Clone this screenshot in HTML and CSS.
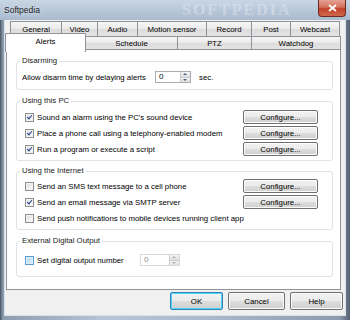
FILE: index.html
```html
<!DOCTYPE html>
<html>
<head>
<meta charset="utf-8">
<link rel="stylesheet" href="styles.css">
</head>
<body>
<div class="window">
  <div class="titlebar">
    <span class="title">Softpedia</span>
    <span class="watermark">SOFTPEDIA</span>
    <div class="close"><svg width="9" height="8" viewBox="0 0 9 8"><path d="M1 1 L8 7 M8 1 L1 7" stroke="#fff" stroke-width="1.8"/></svg></div>
  </div>
  <div class="client">
    <div class="tabrow row1">
      <div class="tab w-general">General</div>
      <div class="tab w-video">Video</div>
      <div class="tab w-audio">Audio</div>
      <div class="tab w-motion">Motion sensor</div>
      <div class="tab w-record">Record</div>
      <div class="tab w-post">Post</div>
      <div class="tab w-webcast">Webcast</div>
    </div>
    <div class="tabrow row2">
      <div class="tab active w-alerts">Alerts</div>
      <div class="tab w-schedule">Schedule</div>
      <div class="tab w-ptz">PTZ</div>
      <div class="tab w-watchdog">Watchdog</div>
    </div>
    <div class="panel">
      <fieldset class="group g-disarm">
        <legend>Disarming</legend>
        <div class="row">
          <span class="plain-label">Allow disarm time by delaying alerts</span>
          <span class="spinner"><span class="spin-input">0</span><span class="spin-btns"><span class="up"></span><span class="down"></span></span></span>
          <span class="unit">sec.</span>
        </div>
      </fieldset>
      <fieldset class="group g-pc">
        <legend>Using this PC</legend>
        <div class="row"><span class="check on"></span><span class="label">Sound an alarm using the PC's sound device</span><span class="btn cfg">Configure...</span></div>
        <div class="row"><span class="check on"></span><span class="label">Place a phone call using a telephony-enabled modem</span><span class="btn cfg">Configure...</span></div>
        <div class="row"><span class="check on"></span><span class="label">Run a program or execute a script</span><span class="btn cfg">Configure...</span></div>
      </fieldset>
      <fieldset class="group g-net">
        <legend>Using the Internet</legend>
        <div class="row"><span class="check"></span><span class="label">Send an SMS text message to a cell phone</span><span class="btn cfg">Configure...</span></div>
        <div class="row"><span class="check on"></span><span class="label">Send an email message via SMTP server</span><span class="btn cfg">Configure...</span></div>
        <div class="row"><span class="check"></span><span class="label">Send push notifications to mobile devices running client app</span></div>
      </fieldset>
      <fieldset class="group g-ext">
        <legend>External Digital Output</legend>
        <div class="row">
          <span class="check hover"></span><span class="label ext-label">Set digital output number</span>
          <span class="spinner disabled"><span class="spin-input">0</span><span class="spin-btns"><span class="up"></span><span class="down"></span></span></span>
        </div>
      </fieldset>
    </div>
    <div class="buttons">
      <span class="btn dlg ok">OK</span>
      <span class="btn dlg cancel">Cancel</span>
      <span class="btn dlg help">Help</span>
    </div>
  </div>
</div>
</body>
</html>
```

FILE: styles.css
```css
html, body {
  margin: 0;
  padding: 0;
  background: #2b3440;
}
body {
  font-family: "Liberation Sans", Arial, sans-serif;
  font-size: 7.8px;
  color: #000;
}
.window {
  width: 350px;
  height: 320px;
  box-sizing: border-box;
  padding: 0 4px 4px 4px;
  background: linear-gradient(90deg, #4a5665 0px, #8d9db0 3px, #b7c6d6 30%, #a9bacd 60%, #8b9bb0 97%, #566273 100%);
  display: flex;
  flex-direction: column;
}
.titlebar {
  height: 20px;
  flex: none;
  display: flex;
  align-items: center;
  position: relative;
  margin: 0 -4px;
  padding: 0 4px;
  background: linear-gradient(180deg, #c9d6e4 0%, #b5c5d7 60%, #aabbcf 100%);
  overflow: hidden;
}
.title {
  font-family: "Liberation Sans", Arial, sans-serif;
  font-size: 8.5px;
  color: #1b1b1b;
  text-shadow: 0 0 4px #e8eef5;
}
.watermark {
  position: absolute;
  left: 182px;
  top: 1px;
  line-height: 18px;
  font-family: "Liberation Serif", serif;
  font-size: 16px;
  font-weight: bold;
  letter-spacing: 2px;
  color: rgba(255,255,255,0.3);
}
.close {
  position: absolute;
  right: 4px;
  top: 0;
  width: 28px;
  height: 17px;
  box-sizing: border-box;
  border: 1px solid #6b2a22;
  border-top: none;
  border-radius: 0 0 4px 4px;
  background: linear-gradient(180deg, #e4a293 0%, #d4705c 45%, #c1412a 55%, #d0694d 100%);
  display: flex;
  align-items: center;
  justify-content: center;
}
.client {
  flex: 1;
  background: #f0f0f0;
  border: 1px solid #d8e1ea;
  border-top: none;
  display: flex;
  flex-direction: column;
}
.tabrow {
  display: flex;
  flex: none;
}
.row1 {
  margin-top: 1px;
  padding-left: 5px;
  height: 15px;
}
.row2 {
  padding-left: 0;
  height: 14px;
  position: relative;
  z-index: 2;
}
.tab {
  box-sizing: border-box;
  height: 100%;
  border: 1px solid #8e9299;
  border-right: none;
  border-bottom: none;
  background: linear-gradient(180deg, #f6f6f6 0%, #eaeaea 50%, #dcdcdc 51%, #e4e4e4 100%);
  display: flex;
  align-items: center;
  justify-content: center;
}
.tab:last-child { border-right: 1px solid #8e9299; }
.row2 .tab { border-bottom: 1px solid #8e9299; }
.tab.active {
  background: #fff;
  height: 19px;
  margin-top: -3px;
  border: 1px solid #8e9299;
  border-bottom: none;
  align-items: flex-start;
  padding-top: 3px;
}
.tab.active + .tab { border-left: none; }
.w-general { width: 51px; }
.w-video { width: 36px; }
.w-audio { width: 40px; }
.w-motion { width: 69px; }
.w-record { width: 45px; }
.w-post { width: 39px; }
.w-webcast { width: 50px; }
.w-alerts { width: 81px; }
.w-schedule { width: 91px; }
.w-ptz { width: 74px; }
.w-watchdog { width: 90px; }

.panel {
  flex: none;
  margin-left: 1px;
  width: 335px;
  height: 241px;
  box-sizing: border-box;
  background: #fff;
  border: 1px solid #8e9299;
  margin-top: -1px;
  padding-top: 6px;
  display: flex;
  flex-direction: column;
}
.group {
  margin: 0 0 0 9px;
  width: 317px;
  box-sizing: border-box;
  border: 1px solid #dde3e8;
  border-radius: 3px;
  padding: 0;
}
.group + .group { margin-top: 6px; }
.group.g-net { margin-top: 5px; }
.group legend {
  padding: 0 2px;
  margin-left: 3px;
  line-height: 10px;
  height: 10px;
  color: #1a1a1a;
}
.g-disarm { padding: 3px 0 4px; }
.g-pc { padding: 3px 0 3px; }
.g-net { padding: 2px 0 3px; }
.g-ext { padding: 6px 0 8px; }
.row {
  display: flex;
  align-items: center;
  height: 16px;
}
.plain-label {
  margin-left: 5px;
  width: 133px;
  white-space: nowrap;
}
.check {
  width: 9px;
  height: 9px;
  box-sizing: border-box;
  margin-left: 8px;
  border: 1px solid #8f8f8f;
  background: linear-gradient(135deg, #dcdcdc 0%, #f4f4f4 70%, #fff 100%);
  box-shadow: inset 0 0 0 1px #f3f3f3;
  flex: none;
  position: relative;
}
.check.on::after {
  content: "";
  position: absolute;
  left: 2px;
  top: 0px;
  width: 2px;
  height: 4px;
  border: solid #1e3f86;
  border-width: 0 1.5px 1.5px 0;
  transform: rotate(40deg);
}
.check.hover {
  border-color: #5b9bd5;
  background: linear-gradient(135deg, #b6dcf5 0%, #d9eefb 100%);
  box-shadow: inset 0 0 0 1px #def0fb;
}
.label {
  margin-left: 3px;
  white-space: nowrap;
}
.ext-label { width: 103px; }
.btn {
  box-sizing: border-box;
  border: 1px solid #707070;
  border-radius: 2px;
  background: linear-gradient(180deg, #f2f2f2 0%, #ebebeb 50%, #dddddd 51%, #cfcfcf 100%);
  box-shadow: inset 0 0 0 1px #fcfcfc;
  display: flex;
  align-items: center;
  justify-content: center;
}
.cfg {
  margin-left: auto;
  margin-right: 14px;
  width: 75px;
  height: 14px;
}
.spinner {
  display: flex;
  height: 12px;
  box-sizing: border-box;
  border: 1px solid #abadb3;
  background: #fff;
}
.spin-input {
  width: 24px;
  padding-left: 3px;
  box-sizing: border-box;
  line-height: 10px;
  font-size: 8px;
}
.spin-btns {
  width: 9px;
  display: flex;
  flex-direction: column;
  border-left: 1px solid #c8cacd;
}
.spin-btns span {
  flex: 1;
  background: linear-gradient(180deg, #f5f5f5, #dedede);
  border-bottom: 1px solid #c8cacd;
  position: relative;
}
.spin-btns span:last-child { border-bottom: none; }
.spin-btns .up::after, .spin-btns .down::after {
  content: "";
  position: absolute;
  left: 2px;
  top: 1px;
  border-left: 2px solid transparent;
  border-right: 2px solid transparent;
}
.spin-btns .up::after { border-bottom: 2px solid #4d6185; }
.spin-btns .down::after { border-top: 2px solid #4d6185; }
.unit { margin-left: 8px; }
.spinner.disabled {
  border-color: #d9d9d9;
  background: #fff;
}
.spinner.disabled .spin-input { color: #8d8d8d; width: 28px; }
.spinner.disabled .spin-btns .up::after { border-bottom-color: #b0b0b0; }
.spinner.disabled .spin-btns .down::after { border-top-color: #b0b0b0; }
.buttons {
  display: flex;
  justify-content: flex-end;
  gap: 5px;
  margin-top: 2px;
  padding-right: 2px;
  height: 18px;
}
.dlg { height: 18px; }
.ok {
  width: 53px;
  border-color: #3c7fb1;
  box-shadow: inset 0 0 0 1px #48d6fb;
}
.cancel { width: 57px; }
.help { width: 53px; }
```
